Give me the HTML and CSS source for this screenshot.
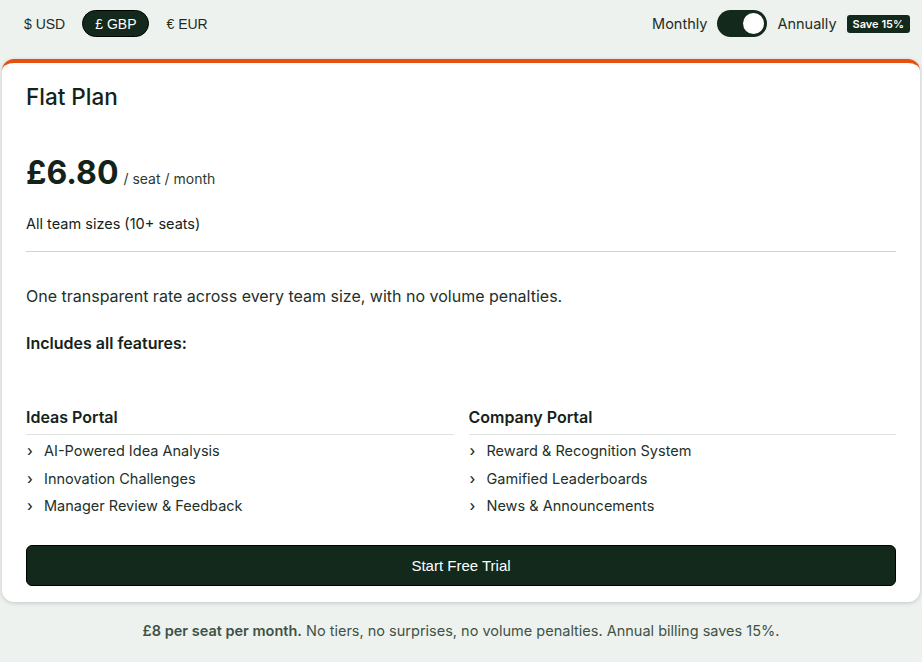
FILE: index.html
```html
<!DOCTYPE html>
<html lang="en">

<head>
    <meta charset="UTF-8">
    <meta name="viewport" content="width=device-width, initial-scale=1.0">
    <title>Pricing</title>
    <link rel="stylesheet" href="styles.css">
</head>

<body>
    <div class="toolbar">
        <div class="currency">
            <button class="cur">$ USD</button>
            <button class="cur active">£ GBP</button>
            <button class="cur">€ EUR</button>
        </div>
        <div class="billing">
            <span class="billing-label">Monthly</span>
            <span class="switch"><span class="knob"></span></span>
            <span class="billing-label">Annually</span>
            <span class="save">Save 15%</span>
        </div>
    </div>

    <div class="card">
        <h2 class="plan-name">Flat Plan</h2>
        <div class="price-row">
            <span class="price">£6.80</span>
            <span class="per">/ seat / month</span>
        </div>
        <p class="sizes">All team sizes (10+ seats)</p>
        <hr class="divider">
        <p class="desc">One transparent rate across every team size, with no volume penalties.</p>
        <p class="includes">Includes all features:</p>

        <div class="features">
            <div class="feature-col">
                <h3>Ideas Portal</h3>
                <ul>
                    <li>AI-Powered Idea Analysis</li>
                    <li>Innovation Challenges</li>
                    <li>Manager Review &amp; Feedback</li>
                </ul>
            </div>
            <div class="feature-col">
                <h3>Company Portal</h3>
                <ul>
                    <li>Reward &amp; Recognition System</li>
                    <li>Gamified Leaderboards</li>
                    <li>News &amp; Announcements</li>
                </ul>
            </div>
        </div>

        <button class="cta">Start Free Trial</button>
    </div>

    <p class="footnote"><strong>£8 per seat per month.</strong> No tiers, no surprises, no volume penalties. Annual billing saves 15%.</p>
</body>

</html>
```

FILE: styles.css
```css
body {
    font-family: Inter, "Noto Sans", sans-serif;
    background-color: #eef2ef;
    color: #14231a;
    margin: 0;
    padding: 0 2px;
}

.toolbar {
    display: flex;
    justify-content: space-between;
    align-items: center;
    height: 47px;
    padding: 0 10px 0 10px;
}

.currency {
    display: flex;
    gap: 5px;
    align-items: center;
}

.cur {
    font-family: "Liberation Sans", Arial, sans-serif;
    font-size: 14px;
    color: #1d2d23;
    background: none;
    border: none;
    border-radius: 14px;
    padding: 0 12px;
    height: 27px;
    cursor: pointer;
}

.cur.active {
    background-color: #13291b;
    color: #ffffff;
    border: 1px solid #000;
}

.billing {
    display: flex;
    align-items: center;
    gap: 10px;
}

.billing-label {
    font-size: 14.5px;
    color: #1d2d23;
}

.switch {
    width: 50px;
    height: 27px;
    border-radius: 14px;
    background-color: #13291b;
    display: flex;
    align-items: center;
    justify-content: flex-end;
    padding: 0 3px;
    box-sizing: border-box;
}

.knob {
    width: 21px;
    height: 21px;
    border-radius: 50%;
    background-color: #ffffff;
}

.save {
    font-size: 11px;
    font-weight: 600;
    color: #ffffff;
    background-color: #13291b;
    border-radius: 3px;
    padding: 2px 6px;
    line-height: 14px;
}

.card {
    background-color: #ffffff;
    border-radius: 12px;
    border-top: 4px solid #e8500f;
    box-shadow: 0 1px 4px rgba(0, 0, 0, 0.18);
    margin-top: 12px;
    padding: 20px 24px 16px;
}

.plan-name {
    font-size: 22.5px;
    font-weight: 500;
    margin: 0;
    line-height: 28px;
}

.price-row {
    margin-top: 42px;
    display: flex;
    align-items: baseline;
    gap: 5px;
}

.price {
    font-size: 32px;
    font-weight: 700;
    line-height: 40px;
}

.per {
    font-size: 14px;
    color: #2b3a31;
}

.sizes {
    font-size: 14.5px;
    margin: 21px 0 0;
    line-height: 20px;
}

.divider {
    border: none;
    border-top: 1px solid #cfd4d1;
    margin: 17px 0 0;
}

.desc {
    font-size: 16px;
    margin: 33px 0 0;
    line-height: 22px;
    color: #22302a;
}

.includes {
    font-size: 16px;
    font-weight: 600;
    margin: 25px 0 0;
    line-height: 22px;
}

.features {
    display: grid;
    grid-template-columns: 1fr 1fr;
    gap: 15px;
    margin-top: 52px;
}

.feature-col h3 {
    font-size: 16px;
    font-weight: 600;
    margin: 0;
    line-height: 22px;
    padding-bottom: 6px;
    border-bottom: 1px solid #dfe3e0;
}

.feature-col ul {
    list-style: none;
    margin: 2px 0 0;
    padding: 0;
}

.feature-col li {
    font-size: 14.5px;
    line-height: 27.5px;
    color: #22302a;
    padding-left: 18px;
    position: relative;
}

.feature-col li::before {
    content: "›";
    position: absolute;
    left: 1px;
    font-weight: 500;
}

.cta {
    display: block;
    width: 100%;
    height: 41px;
    margin-top: 25px;
    background-color: #13291b;
    color: #ffffff;
    font-family: "Liberation Sans", Arial, sans-serif;
    font-size: 15px;
    border: 1px solid #000;
    border-radius: 6px;
    cursor: pointer;
}

.footnote {
    text-align: center;
    font-size: 14.5px;
    color: #3d5346;
    margin: 20px 0 0;
}

.footnote strong {
    font-weight: 600;
}
```
